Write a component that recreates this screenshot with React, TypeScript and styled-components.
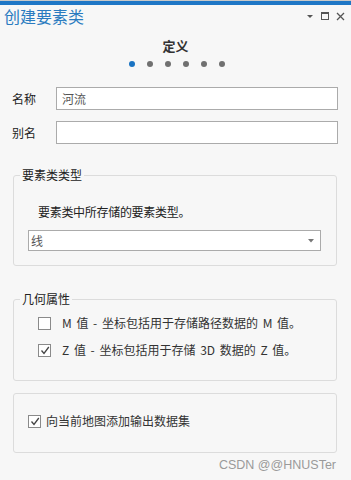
import React from "react";
import styled, { createGlobalStyle } from "styled-components";

const GlobalStyle = createGlobalStyle`
  html, body {
    margin: 0;
    padding: 0;
    background: #f7f7f7;
  }
  body {
    font-family: "Noto Sans CJK SC", "Noto Sans", "Liberation Sans", sans-serif;
    color: #222;
    font-size: 12px;
  }
`;

const Pane = styled.div`
  width: 351px;
  height: 480px;
  display: flex;
  flex-direction: column;
  background: #f7f7f7;
  overflow: hidden;
`;

const AccentBar = styled.div`
  height: 4px;
  background: #1f77c6;
  border-top: 1px solid #c9c9c9;
`;

const Header = styled.div`
  height: 22px;
  display: flex;
  align-items: center;
  justify-content: space-between;
  padding: 0 6px 0 4px;
`;

const Title = styled.div`
  font-size: 16px;
  line-height: 22px;
  color: #2a7bc0;
`;

const WindowTools = styled.div`
  display: flex;
  align-items: center;
  gap: 7px;
  color: #555;
`;

const StepTitle = styled.div`
  margin-top: 10px;
  text-align: center;
  font-size: 13px;
  line-height: 18px;
  font-weight: 700;
  color: #333;
`;

const Dots = styled.div`
  margin-top: 6px;
  display: flex;
  justify-content: center;
  gap: 12px;
  padding-left: 2px;
`;

const Dot = styled.span<{ $active?: boolean }>`
  width: 6px;
  height: 6px;
  border-radius: 50%;
  background: ${(p) => (p.$active ? "#1a73c2" : "#707070")};
`;

const Form = styled.div`
  margin-top: 20px;
  display: flex;
  flex-direction: column;
  gap: 11px;
`;

const FieldRow = styled.div`
  display: flex;
  align-items: center;
  padding: 0 13px 0 12px;
`;

const Label = styled.div`
  width: 44px;
  font-size: 12px;
`;

const TextInput = styled.div`
  flex: 1;
  height: 21px;
  border: 1px solid #ababab;
  background: #fff;
  padding-left: 5px;
  display: flex;
  align-items: center;
  color: #555;
  font-size: 12px;
`;

const Group = styled.fieldset<{ $top: number }>`
  margin: ${(p) => p.$top}px 14px 0 13px;
  padding: 0;
  border: 1px solid #dcdcdc;
  border-radius: 3px;
  min-width: 0;
`;

const Legend = styled.legend`
  margin-left: 6px;
  padding: 0 2px;
  font-size: 12px;
  line-height: 16px;
  color: #222;
`;

const TypeBody = styled.div`
  padding: 20px 15px 14px 14px;
  display: flex;
  flex-direction: column;
  gap: 9px;
`;

const Hint = styled.div`
  padding-left: 10px;
  line-height: 18px;
  letter-spacing: -0.3px;
`;

const Select = styled.div`
  height: 19px;
  border: 1px solid #ababab;
  background: #fff;
  display: flex;
  align-items: center;
  justify-content: space-between;
  padding: 0 6px 0 2px;
  color: #555;
`;

const CheckList = styled.div<{ $pad: string; $gap: number }>`
  padding: ${(p) => p.$pad};
  display: flex;
  flex-direction: column;
  gap: ${(p) => p.$gap}px;
`;

const CheckRow = styled.label<{ $gap: number }>`
  display: flex;
  align-items: center;
  gap: ${(p) => p.$gap}px;
  height: 18px;
  line-height: 18px;
  color: #333;
  word-spacing: 2px;
  white-space: pre;
`;

const Box = styled.span`
  width: 11px;
  height: 11px;
  border: 1px solid #8a8a8a;
  background: #fff;
  display: flex;
  align-items: center;
  justify-content: center;
  flex-shrink: 0;
`;

const Panel = styled.div`
  margin: 12px 14px 0 13px;
  border: 1px solid #dcdcdc;
  border-radius: 3px;
`;

const Watermark = styled.div`
  margin-top: 4px;
  padding-right: 15px;
  text-align: right;
  font-family: "Liberation Sans", Arial, sans-serif;
  font-size: 12.5px;
  line-height: 16px;
  color: #9a9a9a;
`;

const Check = ({ checked }: { checked?: boolean }) => (
  <Box>
    {checked && (
      <svg width="10" height="9" viewBox="0 0 10 9">
        <path d="M1.5 4.5 L4 7.5 L8.8 1" fill="none" stroke="#444" strokeWidth="1.3" />
      </svg>
    )}
  </Box>
);

const App = () => {
  return (
    <>
      <GlobalStyle />
      <Pane>
        <AccentBar />
        <Header>
          <Title>创建要素类</Title>
          <WindowTools>
            <svg width="8" height="8" viewBox="0 0 8 8">
              <path d="M1 3 L7 3 L4 6 Z" fill="#555" />
            </svg>
            <svg width="8" height="8" viewBox="0 0 8 8">
              <rect x="0.5" y="0.5" width="7" height="7" fill="none" stroke="#555" />
              <rect x="0.5" y="0.5" width="7" height="1.5" fill="#555" />
            </svg>
            <svg width="9" height="9" viewBox="0 0 9 9">
              <path d="M1 1 L8 8 M8 1 L1 8" stroke="#555" strokeWidth="1.3" />
            </svg>
          </WindowTools>
        </Header>
        <StepTitle>定义</StepTitle>
        <Dots>
          <Dot $active />
          <Dot />
          <Dot />
          <Dot />
          <Dot />
          <Dot />
        </Dots>
        <Form>
          <FieldRow>
            <Label>名称</Label>
            <TextInput>河流</TextInput>
          </FieldRow>
          <FieldRow>
            <Label>别名</Label>
            <TextInput />
          </FieldRow>
        </Form>
        <Group $top={23}>
          <Legend>要素类类型</Legend>
          <TypeBody>
            <Hint>要素类中所存储的要素类型。</Hint>
            <Select>
              <span>线</span>
              <svg width="6" height="4" viewBox="0 0 6 4">
                <path d="M0 0 L6 0 L3 3.5 Z" fill="#777" />
              </svg>
            </Select>
          </TypeBody>
        </Group>
        <Group $top={25}>
          <Legend>几何属性</Legend>
          <CheckList $pad="7px 10px 21px 24px" $gap={9}>
            <CheckRow $gap={11}>
              <Check />
              M 值 - 坐标包括用于存储路径数据的 M 值。
            </CheckRow>
            <CheckRow $gap={11}>
              <Check checked />
              Z 值 - 坐标包括用于存储 3D 数据的 Z 值。
            </CheckRow>
          </CheckList>
        </Group>
        <Panel>
          <CheckList $pad="18px 10px 22px 14px" $gap={0}>
            <CheckRow $gap={5}>
              <Check checked />
              向当前地图添加输出数据集
            </CheckRow>
          </CheckList>
        </Panel>
        <Watermark>CSDN @@HNUSTer</Watermark>
      </Pane>
    </>
  );
};

export default App;
